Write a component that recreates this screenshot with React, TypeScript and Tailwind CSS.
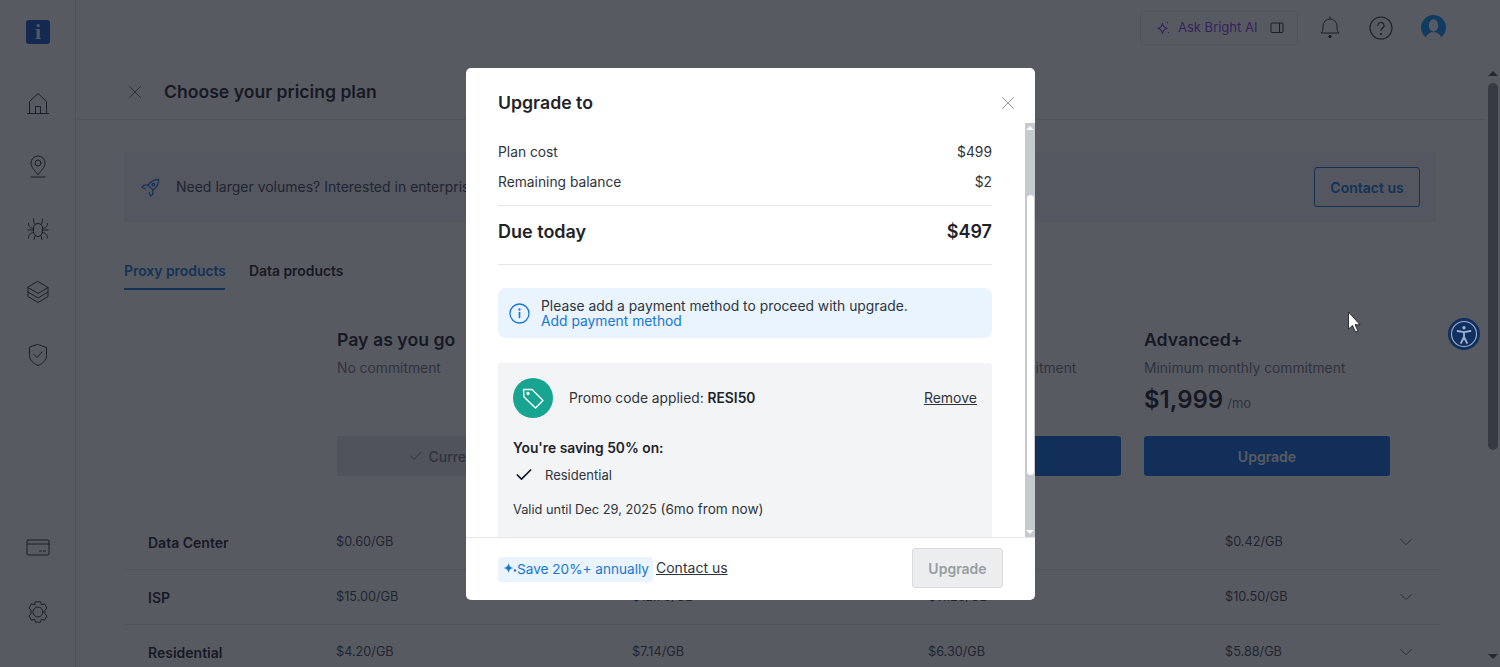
import { Check, ChevronDown, X } from 'lucide-react';

type Row = { name: string; prices: string[] };

const rows: Row[] = [
  { name: 'Data Center', prices: ['$0.60/GB', '$0.51/GB', '$0.45/GB', '$0.42/GB'] },
  { name: 'ISP', prices: ['$15.00/GB', '$12.75/GB', '$11.25/GB', '$10.50/GB'] },
  { name: 'Residential', prices: ['$4.20/GB', '$7.14/GB', '$6.30/GB', '$5.88/GB'] },
];

function NavIcon({ children }: { children: React.ReactNode }) {
  return (
    <svg width="24" height="24" viewBox="0 0 24 24" fill="none" stroke="#1f2937" strokeWidth="1" strokeLinecap="round" strokeLinejoin="round">
      {children}
    </svg>
  );
}

function Sidebar() {
  return (
    <aside className="w-[76px] shrink-0 border-r border-[#e5e7eb] flex flex-col items-center pt-5 pb-[43px]">
      <div className="ml-px w-6 h-6 rounded-[3px] bg-[#0b4fc4] flex items-center justify-center text-white text-[20px] font-bold leading-none [font-family:'Liberation_Serif',serif]">
        i
      </div>
      <div className="mt-[47px] flex flex-col items-center gap-[39px]">
        <NavIcon>
          <path d="M1.500 22.500h21M3.500 22.500V10.500L12 2.500l8.500 8v12" />
          <path d="M9.500 22.500v-7h5v7" />
        </NavIcon>
        <NavIcon>
          <path d="M12 20.500c-3.500-4-7-7.500-7-11.500a7 7 0 0 1 14 0c0 4-3.500 7.500-7 11.500z" />
          <circle cx="12" cy="9" r="3" />
          <path d="M5 23h14" />
        </NavIcon>
        <NavIcon>
          <path d="M9 7.500c-1-1-1.500-2.500-1.500-5.500M15 7.500c1-1 1.500-2.500 1.500-5.500" />
          <path d="M12 6.500c3 0 4.500 2 4.500 4.500v3c0 3-2 5.500-4.500 5.500S7.500 17 7.500 14v-3c0-2.500 1.500-4.500 4.500-4.500z" />
          <path d="M2.500 6.500c0 3 1.500 4.500 5 5M21.500 6.500c0 3-1.500 4.500-5 5M2 13h5.500M22 13h-5.500M2.500 21c0-3 1.500-5 5-5.500M21.500 21c0-3-1.500-5-5-5.500M9 19l-1 3.500M15 19l1 3.500" />
        </NavIcon>
        <NavIcon>
          <path d="M12 1.500l10 6-10 6-10-6z" />
          <path d="M2 7.500v9l10 6 10-6v-9" />
          <path d="M2 12l10 6 10-6" />
        </NavIcon>
        <NavIcon>
          <path d="M12 1.500l8.500 3v8c0 4.500-3.500 8-8.500 10-5-2-8.500-5.500-8.500-10v-8z" />
          <path d="M8 11.500l3 3 5-5.500" />
        </NavIcon>
      </div>
      <div className="mt-auto flex flex-col items-center gap-[40px]">
        <NavIcon>
          <rect x="1" y="4" width="22" height="15" rx="1" />
          <path d="M1 8h22M13.500 15h2M17.500 15h2" />
        </NavIcon>
        <NavIcon>
          <path d="M9.500 1.800h5l1 3 3-1 2.500 4.200-2 2.300v3.400l2 2.300-2.500 4.200-3-1-1 3h-5l-1-3-3 1L3 16l2-2.300v-3.400L3 8l2.500-4.200 3 1z" />
          <circle cx="12" cy="12" r="5" />
        </NavIcon>
      </div>
    </aside>
  );
}

function TopBar() {
  return (
    <div className="h-[65px] shrink-0 flex items-start justify-end pt-[11px] pr-[39px]">
      <div className="w-[158px] h-[34px] border border-[#e5e7eb] rounded-[2px] flex items-center pl-[14px] pr-[13px] text-[13px] text-[#7c3aed]">
        <svg width="15" height="15" viewBox="0 0 16 16" fill="none" stroke="#7c3aed" strokeWidth="1.100" strokeLinejoin="round">
          <path d="M8 2.500c.5 3 2 4.600 5 5.300-3 .7-4.500 2.300-5 5.700-.5-3.400-2-5-5-5.700 3-.7 4.500-2.300 5-5.300z" />
          <path d="M13 1l.5 1.500M14.500 12l-.5 1" />
        </svg>
        <span className="ml-2">Ask Bright AI</span>
        <svg className="ml-auto" width="14" height="12" viewBox="0 0 14 12" fill="none" stroke="#1f2937" strokeWidth="1">
          <rect x="1" y="1" width="12" height="9.500" rx="1" />
          <path d="M9.500 1v9.500" />
        </svg>
      </div>
      <svg className="ml-[21px] mt-[4px]" width="22" height="24" viewBox="0 0 22 24" fill="none" stroke="#1f2937" strokeWidth="1" strokeLinejoin="round">
        <path d="M2 18c2-2 2-4 2-7a7 7 0 0 1 14 0c0 3 0 5 2 7z" />
        <path d="M11 1.500V4" />
        <circle cx="11" cy="21.500" r="1.200" fill="#1f2937" />
      </svg>
      <svg className="ml-[28px] mt-[5px]" width="24" height="24" viewBox="0 0 24 24" fill="none" stroke="#1f2937" strokeWidth="1.100" strokeLinecap="round">
        <circle cx="12" cy="12" r="11" />
        <path d="M9 9.500a3 3 0 1 1 4.500 2.500c-1 .6-1.500 1.200-1.500 2.500" />
        <circle cx="12" cy="18" r=".5" fill="#1f2937" />
      </svg>
      <div className="ml-[28px] mt-[4px] w-[25px] h-[25px] rounded-full bg-[#0094ff] overflow-hidden">
        <svg width="25" height="25" viewBox="0 0 24 24" fill="#ffffff">
          <ellipse cx="12" cy="10" rx="4.500" ry="6" />
          <path d="M4 24c0-5 4-6 5.500-7.500h5C16 18 20 19 20 24z" />
        </svg>
      </div>
    </div>
  );
}

function PlanColumn({ title, sub, price, cta, current }: { title: string; sub: string; price?: string; cta: string; current?: boolean }) {
  return (
    <div className="w-[246px] flex flex-col">
      <div className="text-[17.7px] leading-[22px] font-semibold text-[#111827]">{title}</div>
      <div className="mt-[7px] text-[13.85px] leading-[20px] text-[#6b7280]">{sub}</div>
      <div className="mt-[4px] h-[36px] flex items-baseline">
        {price && (
          <>
            <span className="text-[24px] leading-[36px] font-semibold text-[#111827]">{price}</span>
            <span className="ml-[4px] text-[13px] text-[#6b7280]">/mo</span>
          </>
        )}
      </div>
      <div
        className={
          current
            ? 'mt-[18px] h-10 rounded-[3px] bg-[#e5e7eb] flex items-center justify-center gap-1 text-[14px] font-medium text-[#6b7280]'
            : 'mt-[18px] h-10 rounded-[3px] bg-[#0066dd] flex items-center justify-center text-[14px] font-semibold text-white'
        }
      >
        {current && <Check size={16} strokeWidth={1.5} />}
        {cta}
      </div>
    </div>
  );
}

function PageContent() {
  return (
    <main className="flex-1 min-w-0 flex flex-col">
      <TopBar />
      <div className="h-[55px] shrink-0 flex items-center pl-[48px] border-b border-[#e5e7eb]">
        <X size={22} strokeWidth={1} className="text-[#4b5563]" />
        <h1 className="ml-[18px] text-[17.6px] font-semibold text-[#111827]">Choose your pricing plan</h1>
      </div>
      <div className="pl-[48px] pr-[44px]">
        <div className="mt-[32px] mr-[5px] h-[70px] bg-[#eff4fa] flex items-center pl-[17px] pr-4">
          <svg width="19" height="19" viewBox="0 0 20 20" fill="none" stroke="#0a6fd6" strokeWidth="1.300" strokeLinejoin="round">
            <path d="M18.500 1.500c-5 .2-8.500 2-11 6l5 5c4-2.500 6-6 6-11z" />
            <path d="M7.500 7.500H3L1 10l4 1.500M12.500 12.500V17L10 19l-1.500-4" />
            <circle cx="13" cy="7" r="1.300" />
          </svg>
          <span className="ml-[16px] mb-px text-[14px] text-[#374151]">Need larger volumes? Interested in enterprise plans? Talk to our team.</span>
          <div className="ml-auto w-[106px] h-10 border border-[#0a6fd6] rounded-[3px] flex items-center justify-center text-[14px] font-semibold text-[#0a6fd6]">
            Contact us
          </div>
        </div>
        <div className="mt-8 h-[36px] flex gap-6 text-[13.9px] font-semibold whitespace-nowrap">
          <div className="w-[101px] border-b-2 border-[#0a6fd6] text-[#0a6fd6] leading-[34px]">Proxy products</div>
          <div className="text-[#111827] leading-[34px]">Data products</div>
        </div>
        <div className="mt-[39px] ml-[213px] flex gap-[23px]">
          <PlanColumn title="Pay as you go" sub="No commitment" cta="Current plan" current />
          <PlanColumn title="Starter" sub="Minimum monthly commitment" price="$499" cta="Upgrade" />
          <PlanColumn title="Advanced" sub="Minimum monthly commitment" price="$999" cta="Upgrade" />
          <PlanColumn title="Advanced+" sub="Minimum monthly commitment" price="$1,999" cta="Upgrade" />
        </div>
        <div className="mt-[39px]">
          {rows.map((row) => (
            <div key={row.name} className="h-[55px] shrink-0 grid grid-cols-[212px_296px_296px_297px_1fr_auto] items-center border-b border-[#e5e7eb] text-[12.7px] text-[#374151]">
              <div className="pl-6 text-[14px] font-semibold text-[#111827]">{row.name}</div>
              {row.prices.map((p) => (
                <div key={p}>{p}</div>
              ))}
              <div className="pr-[24px]">
                <ChevronDown size={22} strokeWidth={1} className="text-[#4b5563]" />
              </div>
            </div>
          ))}
        </div>
      </div>
    </main>
  );
}

function PageScrollbar() {
  return (
    <div className="w-[15px] shrink-0 flex flex-col items-center pt-[71px] pb-[8px]">
      <div className="w-0 h-0 border-x-[5px] border-x-transparent border-b-[5px] border-b-[#4b4e54]" />
      <div className="mt-[7px] w-[10px] h-[367px] rounded-full bg-[#8a8d93]" />
      <div className="mt-auto w-0 h-0 border-x-[5px] border-x-transparent border-t-[5px] border-t-[#4b4e54]" />
    </div>
  );
}

function UpgradeModal() {
  return (
    <div className="absolute left-[466px] top-[68px] w-[569px] h-[532px] bg-white rounded-[5px] flex flex-col overflow-hidden text-[#2f343b]">
      <div className="h-[55px] shrink-0 flex items-center pt-[15px] pl-8 pr-[16px]">
        <h2 className="mt-px text-[17.7px] font-semibold text-[#1f2328]">Upgrade to</h2>
        <X size={22} strokeWidth={1} className="ml-auto text-[#8a8f96]" />
      </div>
      <div className="flex-1 min-h-0 flex">
        <div className="flex-1 min-w-0 overflow-hidden pl-8 pr-[33px] pt-[14px]">
          <div className="h-[30px] flex items-center justify-between text-[13.8px]">
            <span>Plan cost</span>
            <span>$499</span>
          </div>
          <div className="h-[30px] flex items-center justify-between text-[13.8px]">
            <span>Remaining balance</span>
            <span>$2</span>
          </div>
          <div className="mt-[8px] h-[60px] pb-[7px] border-y border-[#e3e5e8] flex items-center justify-between text-[18px] font-semibold text-[#1f2328]">
            <span>Due today</span>
            <span>$497</span>
          </div>
          <div className="mt-[23px] h-[50px] rounded-[8px] bg-[#e9f4fe] flex items-center pl-[11px]">
            <svg width="21" height="21" viewBox="0 0 21 21" fill="none" stroke="#1976d2" strokeWidth="1.300" strokeLinecap="round">
              <circle cx="10.500" cy="10.500" r="9.500" />
              <path d="M10.500 9.500v5" strokeWidth="1.600" />
              <circle cx="10.500" cy="6.500" r=".5" fill="#1976d2" />
            </svg>
            <div className="ml-[11px] pt-[2px] text-[13.85px] leading-[15.500px]">
              <div>Please add a payment method to proceed with upgrade.</div>
              <div className="text-[#1976d2]">Add payment method</div>
            </div>
          </div>
          <div className="mt-[25px] h-[200px] rounded-[3px] bg-[#f2f4f6] px-[15px] pt-[15px]">
            <div className="flex items-center">
              <div className="w-10 h-10 rounded-full bg-[#17a592] flex items-center justify-center">
                <svg width="26" height="26" viewBox="0 0 26 26" fill="none" stroke="#ffffff" strokeWidth="1.400" strokeLinejoin="round">
                  <path d="M3.500 4.500h8.500l11 11-7.500 7.500-11.500-11z" />
                  <circle cx="8" cy="8.500" r="1" />
                </svg>
              </div>
              <span className="ml-4 text-[13.8px]">
                Promo code applied: <b className="font-semibold text-[#1f2328]">RESI50</b>
              </span>
              <span className="ml-auto mb-[2px] text-[14px] underline">Remove</span>
            </div>
            <div className="mt-[20px] text-[13.8px] leading-[20px] font-semibold text-[#1f2328]">You're saving 50% on:</div>
            <div className="mt-[6px] flex items-center text-[13px] leading-[20px]">
              <Check size={20} strokeWidth={2} className="text-[#111827] ml-px mr-[11px] mt-[1px]" />
              Residential
            </div>
            <div className="mt-[14px] text-[12.8px] leading-[20px]">
              Valid until Dec 29, 2025 <span className="text-[13.6px]">(6mo from now)</span>
            </div>
          </div>
        </div>
        <div className="w-[10px] shrink-0 bg-[#c5cacf] flex flex-col items-center">
          <div className="mt-[3px] w-0 h-0 border-x-[4px] border-x-transparent border-b-[4px] border-b-white" />
          <div className="mt-[65px] w-[7px] h-[280px] rounded-full bg-white" />
          <div className="mt-auto mb-[3px] w-0 h-0 border-x-[4px] border-x-transparent border-t-[4px] border-t-white" />
        </div>
      </div>
      <div className="h-[63px] shrink-0 border-t border-[#e3e5e8] flex items-center pl-8 pr-8 pb-[2px]">
        <div className="h-[25px] w-[155px] rounded-[3px] bg-[#e9f4fe] flex items-center pl-[5px] text-[13.6px] text-[#1976d2] mt-[2px]">
          <svg width="14" height="14" viewBox="0 0 14 14" fill="#1976d2">
            <path d="M5.500 1c.5 3.200 1.800 4.500 5 5-3.200.5-4.500 1.800-5 5-.5-3.200-1.800-4.500-5-5 3.200-.5 4.500-1.800 5-5z" />
            <circle cx="12" cy="8.500" r="1.200" />
          </svg>
          <span>Save 20%+ annually</span>
        </div>
        <span className="ml-[3px] mb-[2px] text-[14px] underline">Contact us</span>
        <div className="ml-auto w-[91px] h-10 rounded-[3px] border border-[#d9dbdd] bg-[#ebedee] flex items-center justify-center text-[14px] font-semibold text-[#989da3]">
          Upgrade
        </div>
      </div>
    </div>
  );
}

export default function App() {
  return (
    <div className="relative h-screen w-full overflow-hidden bg-white flex [font-family:Inter,sans-serif]">
      <Sidebar />
      <PageContent />
      <PageScrollbar />
      {/* dim layer over the whole page */}
      <div className="absolute inset-0 bg-[#171b24]/72" />
      <UpgradeModal />
      <div className="absolute left-[1448px] top-[318px] w-8 h-8 rounded-full bg-[#10305f] flex items-center justify-center">
        <svg width="28" height="28" viewBox="0 0 28 28" fill="none" stroke="#9fb0cc" strokeWidth="1.100">
          <circle cx="14" cy="14" r="12.500" />
          <circle cx="14" cy="7.800" r="1.700" fill="#9fb0cc" stroke="none" />
          <path d="M7.500 11l6.500 1.200 6.500-1.200M14 12v5l-3 6M14 17l3 6" strokeWidth="1.800" strokeLinecap="round" />
        </svg>
      </div>
      <svg className="absolute left-[1347px] top-[311px]" width="16" height="23" viewBox="0 0 16 23" fill="#ffffff" stroke="#111111" strokeWidth="0.800">
        <path d="M1.500 1v17l4-3.500 3 6.500 2.500-1-3-6.300h5z" />
      </svg>
    </div>
  );
}
